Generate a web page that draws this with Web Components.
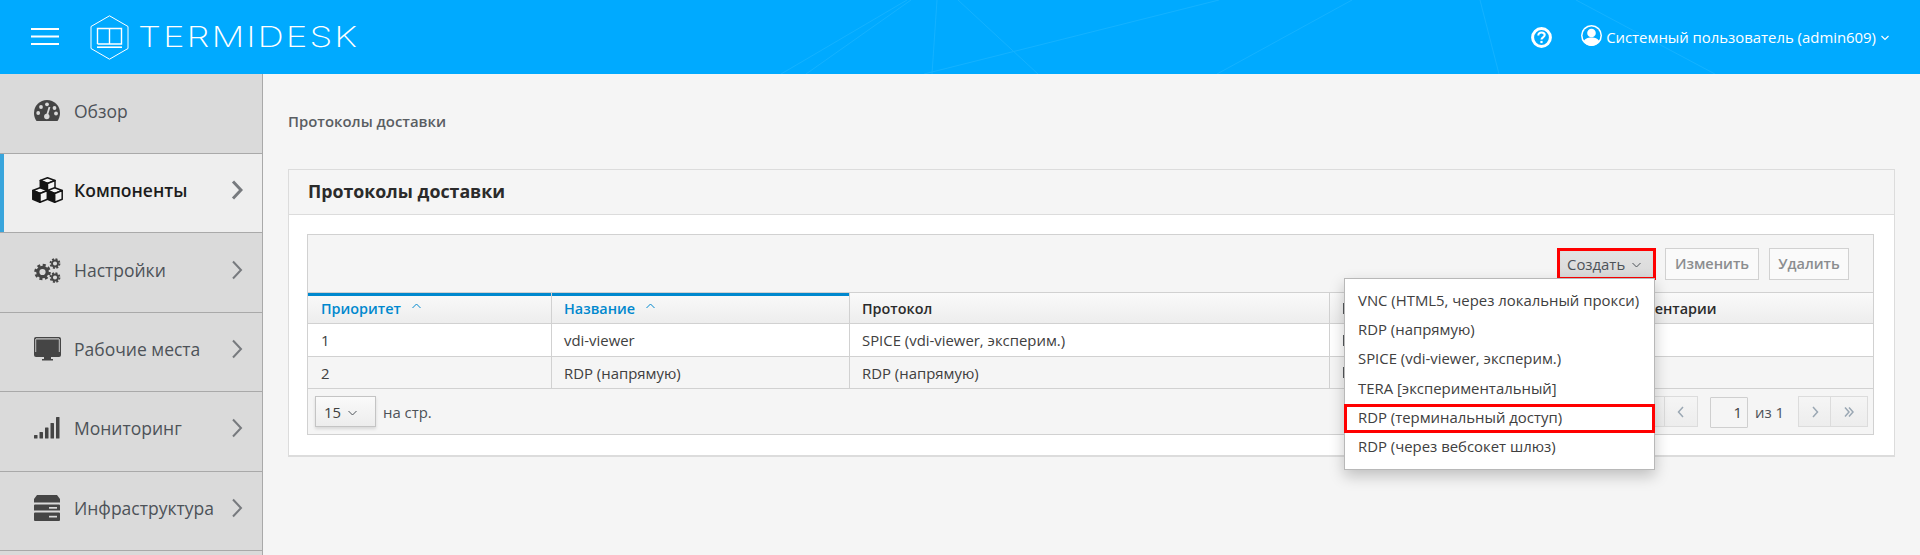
<!DOCTYPE html>
<html lang="ru">
<head>
<meta charset="utf-8">
<title>Termidesk</title>
<style>
  html, body {
    margin: 0;
    height: 555px;
    overflow: hidden;
    background: #f5f5f5;
    font-family: "Open Sans", "Liberation Sans", sans-serif;
    font-size: 14.9px;
    color: #363636;
  }
  app-shell { height: 555px; }
</style>
</head>
<body>
<app-shell>
  <app-header slot="header" user="Системный пользователь (admin609)"></app-header>
  <side-nav slot="nav">
    <nav-item icon="gauge" plain>Обзор</nav-item>
    <nav-item icon="cubes" active>Компоненты</nav-item>
    <nav-item icon="cogs">Настройки</nav-item>
    <nav-item icon="desktop">Рабочие места</nav-item>
    <nav-item icon="signal">Мониторинг</nav-item>
    <nav-item icon="server">Инфраструктура</nav-item>
    <nav-item icon="none"></nav-item>
  </side-nav>
  <page-content>
    <span slot="crumb">Протоколы доставки</span>
    <panel-card heading="Протоколы доставки">
      <data-table></data-table>
    </panel-card>
  </page-content>
</app-shell>

<script>
class AppShell extends HTMLElement {
  constructor() {
    super();
    this.attachShadow({ mode: 'open' });
    this.shadowRoot.innerHTML = `
      <style>
        :host { display: flex; flex-direction: column; overflow: hidden; }
        .body { display: flex; flex: 1; min-height: 0; }
      </style>
      <slot name="header"></slot>
      <div class="body">
        <slot name="nav"></slot>
        <slot></slot>
      </div>
    `;
  }
}

class AppHeader extends HTMLElement {
  constructor() {
    super();
    this.attachShadow({ mode: 'open' });
  }

  connectedCallback() {
    const user = this.getAttribute('user');
    this.shadowRoot.innerHTML = `
      <style>
        :host {
          display: flex;
          align-items: center;
          flex: none;
          height: 74px;
          position: relative;
          overflow: hidden;
          background: #00aaff;
          color: #fff;
        }
        .lines { position: absolute; left: 0; top: 0; }
        .burger { display: flex; margin-left: 31px; }
        .logo { display: flex; align-items: center; margin-left: 31px; }
        .logo svg { display: block; }
        .logo span {
          margin-left: 9px;
          font-family: Inter, "Liberation Sans", sans-serif;
          font-weight: 200;
          font-size: 28px;
          line-height: 29px;
          letter-spacing: 1.5px;
          transform: scaleX(1.31);
          transform-origin: left;
        }
        .right {
          display: flex;
          align-items: center;
          margin-left: auto;
          margin-right: 31px;
          position: relative;
        }
        .help { display: block; margin-right: 29px; }
        .avatar { display: block; margin-right: 4px; margin-top: -3px; }
        .caret { display: block; margin-left: 5px; margin-top: 2px; }
        .name { white-space: nowrap; font-size: 14.9px; }
      </style>
      <svg class="lines" width="1920" height="74" fill="none" stroke="#14b2ff" stroke-width="1">
        <path d="M907 0L781 74M911 0L806 74M937 0L932 74M958 0L1038 74M1219 0L924 74M1352 0L1217 74M1480 0L1499 74M1576 0L1715 74"/>
      </svg>
      <svg class="burger" width="28" height="18" viewBox="0 0 28 18" fill="#fff">
        <rect y="0" width="28" height="2"/><rect y="7.5" width="28" height="2"/><rect y="15" width="28" height="2"/>
      </svg>
      <div class="logo">
        <svg width="39" height="45" viewBox="0 0 39 45" fill="none" stroke="#fff">
          <path d="M19.5 .8L38 11.5V33.5L19.5 44.2L1 33.5V11.5Z" stroke-width="1"/>
          <path d="M7.5 29V13.5H31.5V29H7.5M19.5 13.5V29" stroke-width="1.4"/>
          <path d="M7 32.2H32" stroke-width="1.6"/>
        </svg>
        <span>TERMIDESK</span>
      </div>
      <div class="right">
        <svg class="help" width="21" height="21" viewBox="0 0 21 21" fill="none" stroke="#fff">
          <circle cx="10.5" cy="10.5" r="8.9" stroke-width="3"/>
          <path d="M7.3 8.4c0-1.9 1.4-2.9 3.2-2.9s3.2 1 3.2 2.6c0 2.2-3.2 2.3-3.2 4.4" stroke-width="2.1"/>
          <rect x="9.4" y="13.9" width="2.2" height="2.2" fill="#fff" stroke="none"/>
        </svg>
        <svg class="avatar" width="21" height="21" viewBox="0 0 21 21">
          <circle cx="10.5" cy="10.5" r="10.5" fill="#fff"/>
          <circle cx="10.5" cy="10.5" r="9" fill="#00aaff"/>
          <circle cx="10.5" cy="8" r="4.3" fill="#fff"/>
          <path d="M2.6 16.6c1.2-3.2 4-4.2 7.9-4.2s6.700 1 7.900 4.200a9.300 9.300 0 0 1-15.800 0z" fill="#fff"/>
        </svg>
        <span class="name">${user}</span>
        <svg class="caret" width="8" height="6" viewBox="0 0 8 6" fill="none" stroke="#fff" stroke-width="1.200">
          <path d="M.5 1L4 4.500L7.500 1"/>
        </svg>
      </div>
    `;
  }
}

class SideNav extends HTMLElement {
  constructor() {
    super();
    this.attachShadow({ mode: 'open' });
    this.shadowRoot.innerHTML = `
      <style>
        :host {
          display: flex;
          flex-direction: column;
          flex: none;
          width: 263px;
          box-sizing: border-box;
          padding-top: .6px;
          background: #dadada;
          border-right: 1px solid #a9a9a9;
        }
      </style>
      <slot></slot>
    `;
  }
}

const NAV_ICONS = {
  none: '',
  gauge: `
    <svg width="26" height="21" viewBox="0 0 26 21">
      <path d="M13 0A13 13 0 0 0 0 13C0 16 .9 18.800 2.500 21H23.500C25.100 18.800 26 16 26 13A13 13 0 0 0 13 0Z" fill="#454545"/>
      <g fill="#dadada">
        <circle cx="4.200" cy="13" r="1.900"/><circle cx="7" cy="7" r="1.900"/>
        <circle cx="13" cy="4.300" r="1.900"/><circle cx="20.500" cy="8" r="1.900"/>
        <circle cx="22" cy="13.500" r="1.900"/><circle cx="12.800" cy="16.500" r="2.700"/>
      </g>
      <path d="M12.800 16L15.500 7" stroke="#dadada" stroke-width="1.800"/>
    </svg>`,
  cubes: `
    <svg width="31" height="26" viewBox="0 0 31 26">
      <defs>
        <g id="cube" stroke="#141414" stroke-width="1.500" stroke-linejoin="round">
          <path d="M8 .8L15.500 3.500L8 6.500L.8 3.500Z" fill="#f4f4f4"/>
          <path d="M.8 3.500L8 6.500V15.200L.8 12.300Z" fill="#141414"/>
          <path d="M15.500 3.500V12.300L8 15.200V6.500Z" fill="#f4f4f4"/>
        </g>
      </defs>
      <use href="#cube" x="7.500" y="0"/>
      <use href="#cube" x="0" y="10"/>
      <use href="#cube" x="14.700" y="10"/>
    </svg>`,
  cogs: `
    <svg width="27" height="26" viewBox="0 0 27 26" fill="none" stroke="#454545">
      <circle cx="8.500" cy="15" r="4.700" stroke-width="3.200"/>
      <circle cx="8.500" cy="15" r="7" stroke-width="2.600" stroke-dasharray="3 2.500"/>
      <circle cx="21" cy="6.500" r="3" stroke-width="1.900"/>
      <circle cx="21" cy="6.500" r="4.500" stroke-width="1.800" stroke-dasharray="2 1.530"/>
      <circle cx="21" cy="20.500" r="3" stroke-width="1.900"/>
      <circle cx="21" cy="20.500" r="4.500" stroke-width="1.800" stroke-dasharray="2 1.530"/>
    </svg>`,
  desktop: `
    <svg width="27" height="24" viewBox="0 0 27 24">
      <path d="M2 0H25a2 2 0 0 1 2 2V18a2 2 0 0 1-2 2H2a2 2 0 0 1-2-2V2A2 2 0 0 1 2 0Z" fill="#454545"/>
      <path d="M2 1.200H25V2.400H2Z M1.200 2H2.200V15H1.200Z M24.800 2H25.800V15H24.800Z" fill="#c4c4c4"/>
      <path d="M10 20H17V22H19V23.500H8V22H10Z" fill="#454545"/>
    </svg>`,
  signal: `
    <svg width="26" height="22" viewBox="0 0 26 22" fill="#454545">
      <rect x="0" y="18" width="3.500" height="3.500" rx=".5"/><rect x="5.500" y="15" width="3.500" height="6.500" rx=".5"/>
      <rect x="11" y="10.500" width="3.500" height="11" rx=".5"/><rect x="16.500" y="6" width="3.500" height="15.500" rx=".5"/>
      <rect x="22" y="0" width="3.500" height="21.500" rx=".5"/>
    </svg>`,
  server: `
    <svg width="26" height="26" viewBox="0 0 26 26" fill="#454545">
      <path d="M3 0H23L26 4V7.500H0V4Z"/>
      <path d="M1 9.500H25a1 1 0 0 1 1 1V15.500H0V10.500a1 1 0 0 1 1-1Z"/>
      <path d="M1 17.500H25a1 1 0 0 1 1 1V25a1 1 0 0 1-1 1H1a1 1 0 0 1-1-1V18.500a1 1 0 0 1 1-1Z"/>
      <rect x="15" y="12" width="8" height="1.700" fill="#dadada"/>
      <rect x="15" y="20.800" width="8" height="1.700" fill="#dadada"/>
    </svg>`
};

class NavItem extends HTMLElement {
  constructor() {
    super();
    this.attachShadow({ mode: 'open' });
  }

  connectedCallback() {
    const icon = NAV_ICONS[this.getAttribute('icon')] || '';
    const active = this.hasAttribute('active');
    const plain = this.hasAttribute('plain') || this.getAttribute('icon') === 'none';
    this.shadowRoot.innerHTML = `
      <style>
        :host {
          display: flex;
          align-items: center;
          flex: none;
          height: 79.4px;
          box-sizing: border-box;
          border-bottom: 1px solid #a9a9a9;
          color: #4d5258;
          font-size: 17.5px;
          position: relative;
        }
        :host([active]) {
          background: #eeeeee;
          color: #1c1c1c;
          font-weight: 600;
          box-shadow: inset 4px 0 0 #39a5dc;
        }
        .row { display: flex; align-items: center; width: 100%; margin-top: -6px; }
        .icon {
          width: 32px;
          margin-left: 31px;
          margin-right: 11px;
          display: flex;
          justify-content: center;
          flex: none;
        }
        .icon svg { display: block; }
        .chevron { margin-left: auto; margin-right: 19px; display: block; }
      </style>
      <div class="row">
        <span class="icon">${icon}</span>
        <slot></slot>
        ${plain ? '' : `<svg class="chevron" width="12" height="20" viewBox="0 0 12 20" fill="none" stroke="#777a7e" stroke-width="${active ? 3 : 2}">
          <path d="M2 1.500L10 10L2 18.500"/>
        </svg>`}
      </div>
    `;
  }
}

class PageContent extends HTMLElement {
  constructor() {
    super();
    this.attachShadow({ mode: 'open' });
    this.shadowRoot.innerHTML = `
      <style>
        :host {
          display: block;
          flex: 1;
          min-width: 0;
          padding: 0 25px 0 25px;
          background: #f5f5f5;
        }
        .crumb {
          height: 95px;
          padding-top: 36px;
          box-sizing: border-box;
          font-size: 14.9px;
          font-weight: 600;
          line-height: 22px;
          color: #5a5e63;
        }
      </style>
      <div class="crumb"><slot name="crumb"></slot></div>
      <slot></slot>
    `;
  }
}

class PanelCard extends HTMLElement {
  constructor() {
    super();
    this.attachShadow({ mode: 'open' });
  }

  connectedCallback() {
    const heading = this.getAttribute('heading');
    this.shadowRoot.innerHTML = `
      <style>
        :host {
          display: block;
          box-sizing: border-box;
          background: #fff;
          border: 1px solid #dcdcdc;
          border-bottom-width: 2px;
        }
        h2 {
          margin: 0;
          height: 45px;
          box-sizing: border-box;
          padding-left: 19px;
          background: #f5f5f5;
          border-bottom: 1px solid #dcdcdc;
          font-size: 17.8px;
          font-weight: 700;
          line-height: 43px;
          color: #2b2b2b;
        }
        .body { padding: 19px 20px 20px 18px; }
      </style>
      <h2>${heading}</h2>
      <div class="body"><slot></slot></div>
    `;
  }
}

class CreateMenu extends HTMLElement {
  constructor() {
    super();
    this.attachShadow({ mode: 'open' });
  }

  connectedCallback() {
    const items = [
      'VNC (HTML5, через локальный прокси)',
      'RDP (напрямую)',
      'SPICE (vdi-viewer, эксперим.)',
      'TERA [экспериментальный]',
      'RDP (терминальный доступ)',
      'RDP (через вебсокет шлюз)'
    ];
    this.shadowRoot.innerHTML = `
      <style>
        :host { display: block; position: relative; }
        button {
          display: flex;
          align-items: center;
          width: 99px;
          height: 32px;
          padding: 0 0 0 10px;
          border: 0;
          background: linear-gradient(#e3e3e3, #d9d9d9);
          outline: 3px solid #f00;
          outline-offset: -3px;
          box-shadow: inset 0 0 4px rgba(0, 0, 0, .2);
          font: inherit;
          color: #4d5258;
        }
        button svg { margin-left: 7px; margin-top: 2px; flex: none; }
        ul {
          position: absolute;
          top: 30px;
          right: 1px;
          width: 311px;
          box-sizing: border-box;
          margin: 0;
          padding: 8px 0 6px;
          list-style: none;
          background: #fff;
          border: 1px solid #b8b8b8;
          box-shadow: 0 6px 14px rgba(0, 0, 0, .22);
          z-index: 5;
        }
        li {
          height: 29.4px;
          box-sizing: border-box;
          padding-left: 13px;
          line-height: 27px;
          white-space: nowrap;
          color: #404040;
        }
        li.marked { outline: 3px solid #f00; outline-offset: -3px; margin: 0 -1px; padding-left: 14px; }
      </style>
      <button>Создать
        <svg width="9" height="6" viewBox="0 0 9 6" fill="none" stroke="#4d5258" stroke-width="1">
          <path d="M.5 1L4.500 5L8.500 1"/>
        </svg>
      </button>
      <ul>${items.map((t, i) => `<li class="${i === 4 ? 'marked' : ''}">${t}</li>`).join('')}</ul>
    `;
  }
}

class DataTable extends HTMLElement {
  constructor() {
    super();
    this.attachShadow({ mode: 'open' });
  }

  connectedCallback() {
    const sortMark = `<svg width="9" height="6" viewBox="0 0 9 6" fill="none" stroke="#0088ce" stroke-width="1"><path d="M.5 5L4.500 1L8.500 5"/></svg>`;
    const pageIcon = (d) => `<svg width="14" height="14" viewBox="0 0 14 14" fill="none" stroke="#9aa7b3" stroke-width="1.500"><path d="${d}"/></svg>`;
    this.shadowRoot.innerHTML = `
      <style>
        :host {
          display: block;
          border: 1px solid #d1d1d1;
          background: #f5f5f5;
          color: #404040;
        }
        .toolbar {
          display: flex;
          justify-content: flex-end;
          align-items: center;
          gap: 9px;
          height: 58px;
          padding-right: 24px;
          box-sizing: border-box;
          border-bottom: 1px solid #d1d1d1;
        }
        .btn {
          height: 32px;
          box-sizing: border-box;
          border: 1px solid #d1d1d1;
          background: #fafafa;
          line-height: 30px;
          text-align: center;
          font-size: 14.5px;
          font-weight: 600;
          color: #8b8d8f;
        }
        .btn + .btn { margin-left: 1px; }
        table {
          width: 100%;
          table-layout: fixed;
          border-collapse: separate;
          border-spacing: 0;
        }
        th, td {
          padding: 0 0 0 12px;
          border-right: 1px solid #d1d1d1;
          border-bottom: 1px solid #d1d1d1;
          text-align: left;
          white-space: nowrap;
          overflow: hidden;
        }
        th:first-child, td:first-child { padding-left: 13px; }
        th:last-child, td:last-child { border-right: 0; }
        th {
          height: 31px;
          box-sizing: border-box;
          font-size: 14.4px;
          font-weight: 600;
          color: #2b2b2b;
          background: linear-gradient(#fafafa, #ededed);
        }
        th.sorted {
          color: #0088ce;
          box-shadow: inset 0 3px 0 #0088ce;
        }
        th svg { margin-left: 7px; vertical-align: 5px; }
        td { height: 33px; box-sizing: border-box; background: #fff; }
        tr:nth-child(2) td { height: 32px; background: #f5f5f5; }
        /* only a sliver of this column shows beside the open menu */
        .sliver { display: block; width: 2px; height: 11px; margin-left: 1px; background: #55585c; }
        .footer {
          display: flex;
          align-items: center;
          height: 45px;
          padding: 0 5px 0 7px;
          box-sizing: border-box;
        }
        .select {
          display: flex;
          align-items: center;
          width: 61px;
          height: 31px;
          padding-left: 8px;
          box-sizing: border-box;
          border: 1px solid #c4c4c4;
          background: linear-gradient(#fafafa, #ededed);
          box-shadow: 0 2px 3px rgba(0, 0, 0, .12);
        }
        .select svg { margin-left: 7px; margin-top: 2px; flex: none; }
        .per { margin-left: 7px; color: #4d5258; }
        .pager { display: flex; align-items: center; margin-left: auto; }
        .pg {
          display: flex;
          align-items: center;
          justify-content: center;
          height: 31px;
          box-sizing: border-box;
          border: 1px solid #dcdcdc;
          background: linear-gradient(#f5f5f5, #ededed);
        }
        .pg + .pg { border-left: 0; }
        .num {
          width: 38px;
          height: 31px;
          margin: 1px 7px 0 12px;
          padding-right: 5px;
          box-sizing: border-box;
          border: 1px solid #cfcfcf;
          border-radius: 1px;
          background: #f5f5f5;
          text-align: right;
          line-height: 29px;
        }
        .of { margin-right: 14px; color: #4d5258; }
      </style>
      <div class="toolbar">
        <create-menu></create-menu>
        <span class="btn" style="width:94px">Изменить</span>
        <span class="btn" style="width:80px">Удалить</span>
      </div>
      <table>
        <colgroup>
          <col style="width:244px"><col style="width:298px"><col style="width:480px"><col style="width:272px"><col>
        </colgroup>
        <thead>
          <tr>
            <th class="sorted">Приоритет ${sortMark}</th>
            <th class="sorted">Название ${sortMark}</th>
            <th>Протокол</th>
            <th><span class="sliver"></span></th>
            <th>Комментарии</th>
          </tr>
        </thead>
        <tbody>
          <tr><td>1</td><td>vdi-viewer</td><td>SPICE (vdi-viewer, эксперим.)</td><td><span class="sliver"></span></td><td></td></tr>
          <tr><td>2</td><td>RDP (напрямую)</td><td>RDP (напрямую)</td><td><span class="sliver"></span></td><td></td></tr>
        </tbody>
      </table>
      <div class="footer">
        <span class="select">15
          <svg width="9" height="6" viewBox="0 0 9 6" fill="none" stroke="#4d5258" stroke-width="1"><path d="M.5 1L4.500 5L8.500 1"/></svg>
        </span>
        <span class="per">на стр.</span>
        <div class="pager">
          <span class="pg" style="width:37px">${pageIcon('M7 2.500L3 7L7 11.500M11.500 2.500L7.500 7L11.500 11.500')}</span>
          <span class="pg" style="width:33px">${pageIcon('M9 2L4.500 7L9 12')}</span>
          <span class="num">1</span>
          <span class="of">из 1</span>
          <span class="pg" style="width:33px">${pageIcon('M5 2L9.500 7L5 12')}</span>
          <span class="pg" style="width:37px">${pageIcon('M3 2.500L7 7L3 11.500M7 2.500L11 7L7 11.500')}</span>
        </div>
      </div>
    `;
  }
}

customElements.define('app-shell', AppShell);
customElements.define('app-header', AppHeader);
customElements.define('side-nav', SideNav);
customElements.define('nav-item', NavItem);
customElements.define('page-content', PageContent);
customElements.define('panel-card', PanelCard);
customElements.define('create-menu', CreateMenu);
customElements.define('data-table', DataTable);
</script>
</body>
</html>
